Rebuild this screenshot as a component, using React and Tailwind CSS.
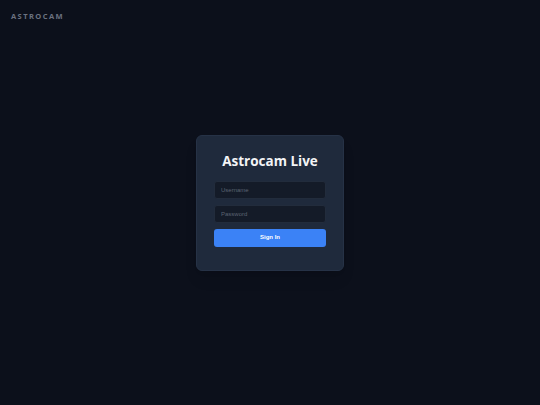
import React from "react";

const App = () => {
  const [username, setUsername] = React.useState("");
  const [password, setPassword] = React.useState("");

  return (
    <div
      className="min-h-screen w-full bg-[#0c101b] flex flex-col"
      style={{ fontFamily: '"Open Sans", "Liberation Sans", sans-serif' }}
    >
      {/* Top bar */}
      <header className="h-0 px-[11px]">
        <div className="pt-[11px] text-[7.5px] leading-[10px] font-bold tracking-[0.19em] text-[#6b7280]">
          ASTROCAM
        </div>
      </header>

      {/* Login */}
      <main className="flex-1 min-h-[405px] flex items-center justify-center">
        <form
          onSubmit={(e) => e.preventDefault()}
          className="w-[148px] rounded-[6px] bg-[#1f2a3c] border border-[#263246] px-[17px] pt-[15px] pb-[23px] shadow-lg"
        >
          <h1 className="text-center text-[13.5px] leading-[20px] font-bold text-[#f3f4f6] mb-[10px]">
            Astrocam Live
          </h1>
          <div className="flex flex-col gap-[6px] font-['Liberation_Sans',sans-serif]">
            <input
              type="text"
              placeholder="Username"
              value={username}
              onChange={(e) => setUsername(e.target.value)}
              className="h-[18px] w-full rounded-[3px] bg-[#141b28] border border-[#222c3c] px-[6px] text-[6px] text-gray-200 placeholder:text-[#5b6472] outline-none"
            />
            <input
              type="password"
              placeholder="Password"
              value={password}
              onChange={(e) => setPassword(e.target.value)}
              className="h-[18px] w-full rounded-[3px] bg-[#141b28] border border-[#222c3c] px-[6px] text-[6px] text-gray-200 placeholder:text-[#5b6472] outline-none"
            />
            <button
              type="submit"
              className="h-[18px] w-full rounded-[3px] bg-[#3b82f6] text-white text-[6px] font-bold"
            >
              Sign In
            </button>
          </div>
        </form>
      </main>
    </div>
  );
};

export default App;
